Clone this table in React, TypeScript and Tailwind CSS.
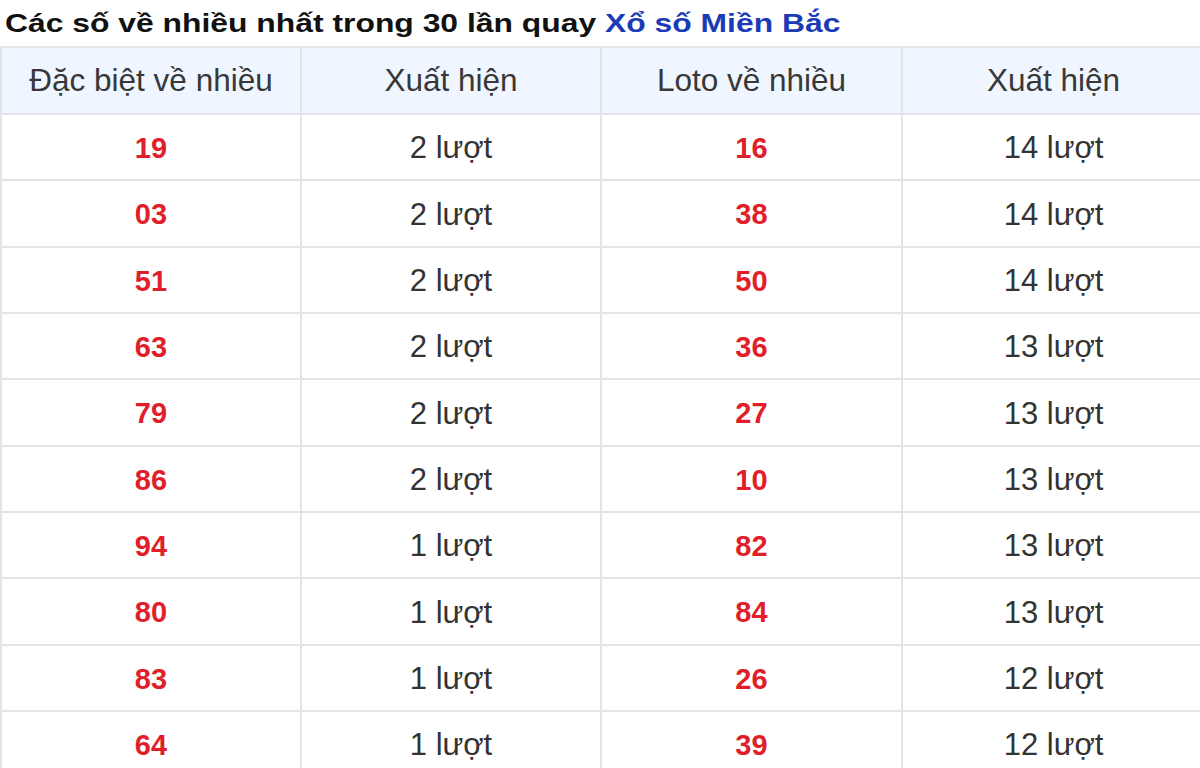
import React from "react";

const rows: [string, string, string, string][] = [
  ["19", "2 lượt", "16", "14 lượt"],
  ["03", "2 lượt", "38", "14 lượt"],
  ["51", "2 lượt", "50", "14 lượt"],
  ["63", "2 lượt", "36", "13 lượt"],
  ["79", "2 lượt", "27", "13 lượt"],
  ["86", "2 lượt", "10", "13 lượt"],
  ["94", "1 lượt", "82", "13 lượt"],
  ["80", "1 lượt", "84", "13 lượt"],
  ["83", "1 lượt", "26", "12 lượt"],
  ["64", "1 lượt", "39", "12 lượt"],
];

export default function App() {
  return (
    <div
      className="w-[1200px] h-[768px] overflow-hidden bg-white"
      style={{ fontFamily: '"Liberation Sans", Arial, sans-serif' }}
    >
      <div className="h-[46px] pl-[5px] pt-[8px] whitespace-nowrap">
        <div className="inline-block origin-left scale-x-[1.225] text-[26px] leading-[30px] font-bold text-[#111]">
          Các số về nhiều nhất trong 30 lần quay{" "}
          <span className="text-[#1a3bb5]">Xổ số Miền Bắc</span>
        </div>
      </div>
      <table className="w-[1204px] border-collapse table-fixed">
        <colgroup>
          <col className="w-[300px]" />
          <col className="w-[300px]" />
          <col className="w-[301px]" />
          <col className="w-[303px]" />
        </colgroup>
        <thead>
          <tr className="h-[67px] bg-[#eff6ff]">
            {["Đặc biệt về nhiều", "Xuất hiện", "Loto về nhiều", "Xuất hiện"].map((h, i) => (
              <th
                key={i}
                className="border-2 border-[#e2e4e7] pt-0 text-center font-normal text-[31.5px] text-[#383838]"
              >
                {h}
              </th>
            ))}
          </tr>
        </thead>
        <tbody>
          {rows.map((r, i) => (
            <tr key={i} className="h-[66.33px]">
              <td className="border-2 border-[#e2e4e7] pt-[3px] text-center font-bold text-[29px] text-[#e01f2a]">
                {r[0]}
              </td>
              <td className="border-2 border-[#e2e4e7] pt-[3px] text-center text-[31px] text-[#333]">
                {r[1]}
              </td>
              <td className="border-2 border-[#e2e4e7] pt-[3px] text-center font-bold text-[29px] text-[#e01f2a]">
                {r[2]}
              </td>
              <td className="border-2 border-[#e2e4e7] pt-[3px] text-center text-[31px] text-[#333]">
                {r[3]}
              </td>
            </tr>
          ))}
        </tbody>
      </table>
    </div>
  );
}
